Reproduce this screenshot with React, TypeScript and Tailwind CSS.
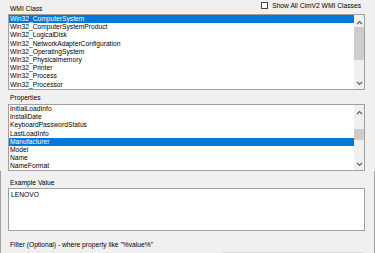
import React from "react";

const classes = [
  "Win32_ComputerSystem",
  "Win32_ComputerSystemProduct",
  "Win32_LogicalDisk",
  "Win32_NetworkAdapterConfiguration",
  "Win32_OperatingSystem",
  "Win32_Physicalmemory",
  "Win32_Printer",
  "Win32_Process",
  "Win32_Processor",
];

const props = [
  "InitialLoadInfo",
  "InstallDate",
  "KeyboardPasswordStatus",
  "LastLoadInfo",
  "Manufacturer",
  "Model",
  "Name",
  "NameFormat",
];

function ScrollBar({ thumbTop, thumbH }: { thumbTop: number; thumbH: number }) {
  return (
    <div className="relative w-[10px] h-full bg-[#f0f0f0] flex flex-col items-center">
      <svg width="7" height="5" viewBox="0 0 7 5" className="mt-[5px]">
        <path d="M1 4 L3.5 1.5 L6 4" stroke="#606060" strokeWidth="1.2" fill="none" />
      </svg>
      <div
        className="absolute left-0 w-[10px] bg-[#cdcdcd]"
        style={{ top: thumbTop, height: thumbH }}
      />
      <svg width="7" height="5" viewBox="0 0 7 5" className="mt-auto mb-[3px]">
        <path d="M1 1 L3.5 3.5 L6 1" stroke="#606060" strokeWidth="1.2" fill="none" />
      </svg>
    </div>
  );
}

function ListBox({
  items,
  selected,
  height,
  thumbTop,
  thumbH,
}: {
  items: string[];
  selected: number;
  height: string;
  thumbTop: number;
  thumbH: number;
}) {
  return (
    <div className={`ml-[8px] w-[357px] ${height} border border-[#a0a0a0] bg-white flex`}>
      <div className="flex-1 flex flex-col">
        {items.map((it, i) => (
          <div
            key={it}
            className={`h-[8.2px] leading-[8.2px] pl-[1px] whitespace-nowrap ${
              i === selected ? "bg-[#0078d7] text-white" : "text-black"
            }`}
          >
            {it}
          </div>
        ))}
      </div>
      <ScrollBar thumbTop={thumbTop} thumbH={thumbH} />
    </div>
  );
}

export default function App() {
  return (
    <div
      className="w-[375px] h-[253px] bg-[#f0f0f0] overflow-hidden text-[6.7px] text-black"
      style={{ fontFamily: '"Liberation Sans", Arial, sans-serif' }}
    >
      <div className="h-[14px] flex items-start justify-between pl-[10px] pr-[14px]">
        <div className="pt-[5px] leading-[8px]">WMI Class</div>
        <div className="pt-[2px] flex items-center gap-[4px]">
          <div className="w-[7px] h-[7px] border border-[#444] bg-white" />
          <span className="leading-[7px]">Show All CimV2 WMI Classes</span>
        </div>
      </div>
      <ListBox items={classes} selected={0} height="h-[76px]" thumbTop={12} thumbH={33} />
      <div className="pl-[10px] pt-[4px] pb-[2px] leading-[8px]">Properties</div>
      <ListBox items={props} selected={4} height="h-[67px]" thumbTop={24} thumbH={11} />
      <div className="h-[82px] border-x border-[#a0a0a0]">
        <div className="pl-[9px] pt-[8px] pb-[1px] leading-[8px]">Example Value</div>
        <div className="ml-[7px] w-[357px] h-[43px] border border-[#a0a0a0] bg-white pl-[2px] pt-[2px] leading-[8px]">
          LENOVO
        </div>
        <div className="pl-[9px] pt-[10px] leading-[8px]">
          Filter (Optional) - where property like "%value%"
        </div>
        <div className="ml-[221px] mt-[3px] w-[141px] h-[1px] bg-[#dcdcdc]" />
      </div>
    </div>
  );
}
